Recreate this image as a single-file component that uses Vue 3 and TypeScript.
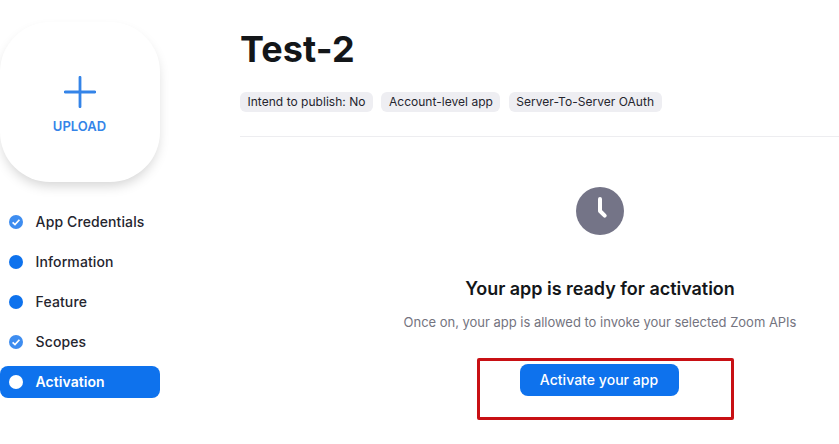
<script setup lang="ts">
interface Step {
  label: string
  state: 'checked' | 'filled' | 'active'
}

const steps: Step[] = [
  { label: 'App Credentials', state: 'checked' },
  { label: 'Information', state: 'filled' },
  { label: 'Feature', state: 'filled' },
  { label: 'Scopes', state: 'checked' },
  { label: 'Activation', state: 'active' },
]

const tags: string[] = ['Intend to publish: No', 'Account-level app', 'Server-To-Server OAuth']
</script>

<template>
  <div class="page">
    <aside class="sidebar">
      <button class="upload" type="button">
        <svg class="plus" viewBox="0 0 32 32" aria-hidden="true">
          <path d="M16 1.3V30.7M1.3 16H30.7" />
        </svg>
        <span class="upload-label">UPLOAD</span>
      </button>
      <nav class="steps">
        <a v-for="step in steps" :key="step.label" class="step" :class="step.state">
          <svg class="dot" viewBox="0 0 14 14" aria-hidden="true">
            <circle cx="7" cy="7" r="7" />
            <path v-if="step.state === 'checked'" d="M3.6 7.3L6 9.6L10.4 4.7" />
          </svg>
          <span>{{ step.label }}</span>
        </a>
      </nav>
    </aside>
    <main class="content">
      <header class="header">
        <h1 class="title">Test-2</h1>
        <div class="tags">
          <span v-for="tag in tags" :key="tag" class="tag">{{ tag }}</span>
        </div>
      </header>
      <section class="activation">
        <svg class="clock" viewBox="0 0 48 48" aria-hidden="true">
          <circle cx="24" cy="24" r="24" />
          <path d="M24 12V24L28.7 28.7" />
        </svg>
        <h2 class="heading">Your app is ready for activation</h2>
        <p class="note">Once on, your app is allowed to invoke your selected Zoom APIs</p>
        <div class="action">
          <button class="activate" type="button">Activate your app</button>
          <span class="highlight"></span>
        </div>
      </section>
    </main>
  </div>
</template>

<style>
body {
  background: #fff;
  overflow: hidden;
}
</style>

<style scoped>
.page {
  display: flex;
  gap: 80px;
  height: 444px;
  overflow: hidden;
  background: #fff;
  font-family: Inter, "Liberation Sans", sans-serif;
  color: #25252e;
}
.sidebar {
  width: 160px;
  flex: none;
  padding-top: 22px;
}
.upload {
  display: flex;
  flex-direction: column;
  align-items: center;
  width: 160px;
  height: 160px;
  padding: 54px 0 0;
  border: 0;
  border-radius: 50px;
  background: #fff;
  box-shadow: 0 6px 12px -2px rgba(0, 0, 0, 0.17);
  font-family: inherit;
  color: #3484e8;
}
.plus {
  width: 32px;
  height: 32px;
  fill: none;
  stroke: currentColor;
  stroke-width: 2.8;
  stroke-linecap: round;
}
.upload-label {
  margin-top: 10px;
  padding-right: 1px;
  font-size: 13px;
  line-height: 16px;
  font-weight: 600;
}
.steps {
  display: flex;
  flex-direction: column;
  gap: 8px;
  margin-top: 24px;
}
.step {
  display: flex;
  align-items: center;
  gap: 12.6px;
  height: 32px;
  padding-left: 9px;
  border-radius: 8px;
  font-size: 14px;
  line-height: 20px;
  font-weight: 500;
  letter-spacing: 0.11px;
  white-space: nowrap;
}
.dot {
  width: 14px;
  height: 14px;
  fill: #0e72ed;
}
.dot path {
  fill: none;
  stroke: #fff;
  stroke-width: 1.7;
}
.checked .dot {
  fill: #3e8df0;
}
.active {
  background: #0e72ed;
  color: #fff;
  font-weight: 600;
  letter-spacing: 0.04px;
}
.active .dot {
  fill: #fff;
}
.content {
  flex: 1;
  min-width: 0;
}
.header {
  padding: 27px 0 24px;
  border-bottom: 1px solid #ededf0;
}
.title {
  margin: 0;
  font-size: 36px;
  line-height: 44px;
  font-weight: 700;
  letter-spacing: 0.1px;
  color: #131619;
}
.tags {
  display: flex;
  gap: 8.4px;
  margin-top: 21px;
}
.tag {
  height: 20px;
  padding: 0 7.5px;
  border-radius: 6px;
  background: #eeeef2;
  font-size: 12px;
  line-height: 20px;
  letter-spacing: 0.03px;
  white-space: nowrap;
}
.activation {
  display: flex;
  flex-direction: column;
  align-items: center;
  width: 720px;
  padding-top: 50px;
}
.clock {
  width: 48px;
  height: 48px;
  fill: #747487;
}
.clock path {
  fill: none;
  stroke: #fff;
  stroke-width: 4;
  stroke-linecap: round;
  stroke-linejoin: round;
}
.heading {
  margin: 42px 0 0;
  font-size: 18px;
  line-height: 24px;
  font-weight: 600;
  letter-spacing: -0.03px;
  color: #131619;
}
.note {
  margin: 11px 0 0;
  font-size: 13px;
  line-height: 20px;
  letter-spacing: -0.02px;
  color: #747480;
}
.action {
  position: relative;
  margin: 32px 1px 0 0;
  padding-right: 1px;
}
.activate {
  display: block;
  width: 159px;
  height: 32px;
  padding: 0;
  border: 0;
  border-radius: 8px;
  background: #0e72ed;
  color: #fff;
  font-family: inherit;
  font-size: 14px;
  line-height: 20px;
  font-weight: 500;
  letter-spacing: 0.04px;
}
.highlight {
  position: absolute;
  left: -43px;
  top: -6px;
  width: 257px;
  height: 62px;
  box-sizing: border-box;
  border: 3px solid #c81014;
  border-radius: 2px;
  pointer-events: none;
}
</style>
